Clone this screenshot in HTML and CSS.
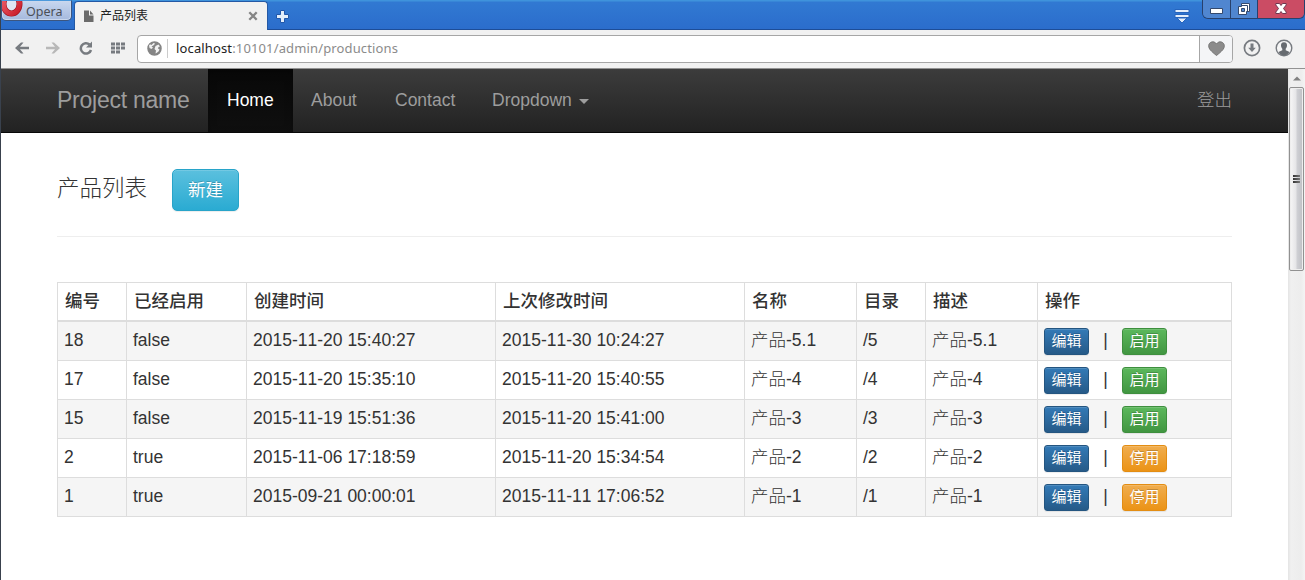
FILE: index.html
```html
<!DOCTYPE html>
<html lang="zh-CN">
<head>
<meta charset="utf-8">
<title>产品列表</title>
<link rel="stylesheet" href="styles.css">
</head>
<body>
<div class="window">
  <header class="titlebar">
    <div class="opera-button">
      <svg class="opera-logo" width="22" height="17" viewBox="0 0 22 17"><defs><linearGradient id="red" x1="0" y1="0" x2="1" y2="1"><stop offset="0" stop-color="#f0606a"/><stop offset="1" stop-color="#c81c2a"/></linearGradient></defs><ellipse cx="10.500" cy="3" rx="8" ry="9.500" fill="#dfe6f3" stroke="#a31520" stroke-width="6"/><ellipse cx="10.500" cy="3" rx="8" ry="9.500" fill="none" stroke="url(#red)" stroke-width="4.800"/></svg>
      <span>Opera</span>
    </div>
    <div class="tab">
      <svg width="11" height="13" viewBox="0 0 11 13"><path fill="#6b6b6b" d="M1 .5h5v5h4.500v6.500H1z"/><path fill="#6b6b6b" d="M7 .5 10.500 4.500H7z"/></svg>
      <span class="tab-title">产品列表</span>
      <svg width="10" height="10" viewBox="0 0 10 10"><path d="M1.300 1.300 8.700 8.700M8.700 1.300 1.300 8.700" stroke="#858585" stroke-width="2.300"/></svg>
    </div>
    <svg class="new-tab" width="13" height="13" viewBox="0 0 13 13"><path d="M4.500.5h4v4h4v4h-4v4h-4v-4h-4v-4h4z" fill="#e3eefb" stroke="#2057aa"/></svg>
    <svg class="tab-menu" width="16" height="14" viewBox="0 0 16 14"><path d="M1 .5h14v3H1zM1 5.500h14v3H1zM3 9h10l-5 5z" fill="#e3eefb" stroke="#2664bd"/></svg>
    <div class="controls">
      <div class="control minimize"><svg width="13" height="6" viewBox="0 0 13 6"><path d="M.5.5h12v5H.5z" fill="#fff" stroke="#34496d"/></svg></div>
      <div class="control restore"><svg width="12" height="12" viewBox="0 0 12 12"><path d="M3.500.5h8v8h-3v3h-8v-8h3z" fill="#fff" stroke="#34496d"/><path d="M3.500 5.500h3v3h-3z" fill="#5288cf" stroke="#34496d"/><path d="M4 2.500h5.500V8" fill="none" stroke="#34496d"/></svg></div>
      <div class="control close"><svg width="12" height="11" viewBox="0 0 12 11"><path d="M.8.5h3.700L6 2.500 7.500.5h3.700v1.500L8.500 5.500l2.700 3.500v1.500H7.500L6 8.500 4.500 10.500H.8V9l2.700-3.500L.8 2z" fill="#fff" stroke="#70374f"/></svg></div>
    </div>
  </header>
  <div class="toolbar">
    <svg class="nav-icon" width="14" height="12" viewBox="0 0 14 12"><path d="M0 6 6 .5h2.500L5 4.700h9v2.600H5l3.500 4.200H6z" fill="#777b80"/></svg>
    <svg class="nav-icon" width="14" height="12" viewBox="0 0 14 12"><path d="M14 6 8 .5H5.500L9 4.700H0v2.600h9l-3.500 4.200H8z" fill="#b8b8b8"/></svg>
    <svg class="nav-icon reload" width="14" height="14" viewBox="0 0 14 14"><path d="M10.500 3.500A5.200 5.200 0 1 0 12 9" fill="none" stroke="#777b80" stroke-width="2.500"/><path d="M13 .5v6H7z" fill="#777b80"/></svg>
    <svg class="nav-icon grid" width="15" height="12" viewBox="0 0 15 12"><path d="M0 .5h4v3H0zM5 .5h4v3H5zM10 .5h4v3h-4zM0 4.500h4v3H0zM5 4.500h4v3H5zM10 4.500h4v3h-4zM0 8.500h4v3H0zM5 8.500h4v3H5z" fill="#777b80"/></svg>
    <div class="address">
      <svg class="globe" width="15" height="15" viewBox="0 0 15 15"><circle cx="7.500" cy="7.500" r="6.500" fill="#858585" stroke="#858585" stroke-width="1.500"/><path d="M2 4.500 3 3.200 4.500 4l2-2 1.500.5-1 1.500-2.500 1.500L6 6.500 4.500 8 2.500 7zM8.500 5l3-1.500 1.500 2-1.500.5-.5 1.500 1.500 1-1 2-2 1.500-1 .5.500-3L7.500 8z" fill="#f1f1f1"/></svg>
      <span class="url"><span class="host">localhost</span>:10101/admin/productions</span>
      <span class="heart"><svg width="17" height="15" viewBox="0 0 17 15"><path d="M8.500 14.500C3 10 .7 8 .7 4.700.7 1 6 -.9 8.500 3 11-.9 16.300 1 16.300 4.700 16.300 8 14 10 8.500 14.500z" fill="#8b8b8b" stroke="#777"/></svg></span>
    </div>
    <svg class="download" width="18" height="18" viewBox="0 0 18 18"><circle cx="9" cy="9" r="7.600" fill="none" stroke="#777b80" stroke-width="1.700"/><path d="M7.500 4.500h3v4.200h2.300L9 13 5.200 8.700h2.300z" fill="#777b80"/></svg>
    <svg class="account" width="18" height="18" viewBox="0 0 18 18"><circle cx="9" cy="9" r="7.800" fill="#f5f5f5" stroke="#777b80" stroke-width="1.400"/><path d="M9 3.200c2.300 0 3.200 1.500 3 3.600-.1 1.500-.8 2.400-1.300 3V11.300l3.900 1.700C13 15.500 11 16.500 9 16.500S5 15.500 3.400 13l3.900-1.700V9.800C6.800 9.200 6.100 8.300 6 6.800 5.800 4.700 6.700 3.200 9 3.200z" fill="#676b70"/></svg>
  </div>
  <div class="viewport">
    <div class="page">
      <nav class="navbar">
        <a class="brand">Project name</a>
        <a class="nav-link active">Home</a>
        <a class="nav-link">About</a>
        <a class="nav-link contact">Contact</a>
        <a class="nav-link dropdown">Dropdown<i class="caret"></i></a>
        <a class="logout">登出</a>
      </nav>
      <main class="container">
        <div class="page-header"><h1>产品列表</h1><a class="btn btn-info">新建</a></div>
        <table class="products">
          <colgroup><col class="c-id"><col class="c-enabled"><col class="c-date"><col class="c-date"><col class="c-name"><col class="c-id"><col class="c-name"><col></colgroup>
          <thead><tr><th>编号</th><th>已经启用</th><th>创建时间</th><th>上次修改时间</th><th>名称</th><th>目录</th><th>描述</th><th>操作</th></tr></thead>
          <tbody>
            <tr><td>18</td><td>false</td><td>2015-11-20 15:40:27</td><td>2015-11-30 10:24:27</td><td>产品-5.1</td><td>/5</td><td>产品-5.1</td><td><div class="actions"><a class="btn btn-primary">编辑</a><span class="bar">|</span><a class="btn btn-success">启用</a></div></td></tr>
            <tr><td>17</td><td>false</td><td>2015-11-20 15:35:10</td><td>2015-11-20 15:40:55</td><td>产品-4</td><td>/4</td><td>产品-4</td><td><div class="actions"><a class="btn btn-primary">编辑</a><span class="bar">|</span><a class="btn btn-success">启用</a></div></td></tr>
            <tr><td>15</td><td>false</td><td>2015-11-19 15:51:36</td><td>2015-11-20 15:41:00</td><td>产品-3</td><td>/3</td><td>产品-3</td><td><div class="actions"><a class="btn btn-primary">编辑</a><span class="bar">|</span><a class="btn btn-success">启用</a></div></td></tr>
            <tr><td>2</td><td>true</td><td>2015-11-06 17:18:59</td><td>2015-11-20 15:34:54</td><td>产品-2</td><td>/2</td><td>产品-2</td><td><div class="actions"><a class="btn btn-primary">编辑</a><span class="bar">|</span><a class="btn btn-warning">停用</a></div></td></tr>
            <tr><td>1</td><td>true</td><td>2015-09-21 00:00:01</td><td>2015-11-11 17:06:52</td><td>产品-1</td><td>/1</td><td>产品-1</td><td><div class="actions"><a class="btn btn-primary">编辑</a><span class="bar">|</span><a class="btn btn-warning">停用</a></div></td></tr>
          </tbody>
        </table>
      </main>
    </div>
    <div class="scrollbar">
      <svg class="scroll-up" width="8" height="5" viewBox="0 0 8 5"><path d="M0 4.500 4 .5l4 4z" fill="#808080"/></svg>
      <div class="thumb"><i></i><i></i><i></i></div>
    </div>
  </div>
</div>
</body>
</html>
```
FILE: styles.css
```css
* { box-sizing: border-box; }
body {
  margin: 0;
  overflow: hidden;
  font-family: "Liberation Sans", "Noto Sans CJK SC", sans-serif;
  font-kerning: none;
  color: #333;
}
.window {
  width: 1305px;
  height: 580px;
  display: flex;
  flex-direction: column;
  border-left: 1px solid #39414d;
}
.titlebar {
  height: 30px;
  flex: none;
  display: flex;
  align-items: flex-start;
  background: linear-gradient(#3f93dc 0, #3f93dc 1px, #3179d2 2px, #2b6dcc 29px, #1d4d98 29px);
}
.opera-button {
  width: 71px;
  height: 21px;
  display: flex;
  overflow: hidden;
  border: 1px solid #3c5680;
  border-top: 1px solid #4c99dc;
  border-radius: 0 0 5px 5px;
  background: linear-gradient(#c8d7ef, #a5b9dd);
  box-shadow: inset 0 0 0 1px #c9d7ed;
  font: 12.5px/22px "Noto Sans", sans-serif;
  color: #4a4f58;
}
.opera-logo { flex: none; margin-left: -1px; }
.opera-button span { margin-left: 3px; }
.tab {
  width: 194px;
  height: 29px;
  margin: 1px 0 0 2px;
  padding: 0 9px 0 8px;
  display: flex;
  align-items: center;
  background: #f1f1f1;
  border: 1px solid #2459a5;
  border-width: 1px 1px 0;
  border-radius: 4px 4px 0 0;
}
.tab-title {
  flex: 1;
  margin-left: 6px;
  font-size: 12px;
  line-height: 29px;
  color: #222;
}
.new-tab { margin: 10px 0 0 8px; }
.tab-menu { margin: 9px 12px 0 auto; }
.controls {
  display: flex;
  width: 103px;
  height: 19px;
  border: 1px solid #28416d;
  border-top: 0;
  border-radius: 0 0 6px 6px;
  overflow: hidden;
}
.control { display: flex; justify-content: center; background: #5086d0; border-right: 1px solid #28416d; }
.control svg { flex: none; }
.minimize { width: 28px; padding-top: 8px; }
.restore { width: 27px; padding-top: 3px; }
.close { flex: 1; padding-top: 3px; background: #cb4c64; border: 0; }
.toolbar {
  height: 39px;
  flex: none;
  display: flex;
  align-items: center;
  padding: 0 11px 2px 14px;
  background: #f1f1f1;
  border-bottom: 1px solid #929292;
}
.nav-icon { flex: none; margin-right: 17px; }
.nav-icon.reload { margin: 0 18px 0 2px; }
.nav-icon.grid { margin-right: 11px; }
.address {
  flex: none;
  width: 1096px;
  height: 28px;
  margin-top: 1px;
  display: flex;
  align-items: center;
  background: #fff;
  border: 1px solid #a6a6a6;
  border-radius: 4px;
  overflow: hidden;
}
.globe { margin: 0 5px 0 9px; }
.url {
  flex: 1;
  padding-left: 8px;
  border-left: 1px solid #ccc;
  font: 13px/19px "Noto Sans", sans-serif;
  letter-spacing: .14px;
  color: #8b8b8b;
}
.host { color: #222; }
.heart {
  width: 33px;
  height: 26px;
  display: flex;
  align-items: center;
  justify-content: center;
  background: #f4f5f7;
  border-left: 1px solid #a6a6a6;
}
.download { margin-left: 10px; }
.account { margin-left: 14px; }
.viewport { flex: 1; display: flex; min-height: 0; background: #fff; }
.page { width: 1287px; }
.navbar {
  height: 64px;
  padding: 0 56px;
  display: flex;
  background: linear-gradient(#3c3c3c, #222);
  border-bottom: 1px solid #080808;
  color: #9d9d9d;
  font-size: 17.5px;
  line-height: 63px;
}
.brand { width: 151px; font-size: 23px; letter-spacing: -.25px; white-space: nowrap; }
.nav-link { padding-left: 18px; width: 84px; white-space: nowrap; }
.nav-link.active {
  width: 85px;
  padding-left: 19px;
  color: #fff;
  background: linear-gradient(#080808, #0f0f0f);
  box-shadow: inset 0 3px 9px rgba(0, 0, 0, .25);
}
.nav-link.contact { width: 97px; }
.nav-link.dropdown { width: 140px; }
.caret {
  display: inline-block;
  margin-left: 7px;
  vertical-align: middle;
  border: 5px solid transparent;
  border-top-color: #9d9d9d;
  border-bottom: 0;
}
.logout { margin-left: auto; font-weight: 300; }
.container { padding: 36px 56px 0; }
.page-header {
  height: 68px;
  display: flex;
  align-items: flex-start;
  border-bottom: 1px solid #eee;
}
.page-header h1 {
  margin: 0;
  width: 115px;
  font-size: 22.5px;
  line-height: 39px;
  font-weight: 300;
}
.btn {
  flex: none;
  display: block;
  border: 1px solid;
  color: #fff;
  text-align: center;
  text-shadow: 0 -1px 0 rgba(0, 0, 0, .2);
  box-shadow: inset 0 1px 0 rgba(255, 255, 255, .15), 0 1px 1px rgba(0, 0, 0, .075);
}
.btn-info {
  width: 67px;
  height: 42px;
  font-size: 17.5px;
  line-height: 40px;
  border-color: #28a4c9;
  border-radius: 5px;
  background: linear-gradient(#5bc0de, #2aabd2);
}
.products {
  width: 1175px;
  margin-top: 45px;
  table-layout: fixed;
  border-collapse: separate;
  border-spacing: 0;
  border: 1px solid #ddd;
  border-width: 1px 0 0 1px;
  font-size: 17.5px;
}
.c-id { width: 69px; }
.c-enabled { width: 120px; }
.c-date { width: 249px; }
.c-name { width: 112px; }
.products th, .products td {
  height: 39px;
  padding: 0 0 0 6px;
  border: 1px solid #ddd;
  border-width: 0 1px 1px 0;
  text-align: left;
  line-height: 36px;
  vertical-align: top;
  white-space: nowrap;
  font-weight: 300;
}
.products th { padding-left: 7px; border-bottom-width: 2px; font-weight: 500; }
.products tbody tr:nth-child(odd) { background: #f5f5f5; }
.actions { display: flex; align-items: flex-start; padding-top: 6px; }
.actions .btn {
  width: 45px;
  height: 27px;
  font-size: 15px;
  font-weight: 400;
  line-height: 24px;
  border-radius: 3px;
}
.bar { width: 33px; text-align: center; line-height: 25px; }
.btn-primary { border-color: #245580; background: linear-gradient(#337ab7, #265a88); }
.btn-success { border-color: #3e8f3e; background: linear-gradient(#5cb85c, #419641); }
.btn-warning { border-color: #e38d13; background: linear-gradient(#f0ad4e, #eb9316); }
.scrollbar {
  width: 17px;
  display: flex;
  flex-direction: column;
  align-items: center;
  background: linear-gradient(90deg, #e4e4e4, #f0f0f0 3px, #ededed 13px, #f4f4f4);
}
.scroll-up { margin: 7px 0 6px; flex: none; }
.thumb {
  width: 15px;
  height: 184px;
  display: flex;
  flex-direction: column;
  align-items: center;
  justify-content: center;
  gap: 1px;
  border: 1px solid #919191;
  border-radius: 2px;
  background: linear-gradient(90deg, #f7f7f7, #e5e5e7 6px, #cfd0d4 7px, #bebfc4);
  box-shadow: inset 0 0 0 1px #eee;
}
.thumb i { width: 7px; height: 2px; background: linear-gradient(90deg, #333, #777); }
```
